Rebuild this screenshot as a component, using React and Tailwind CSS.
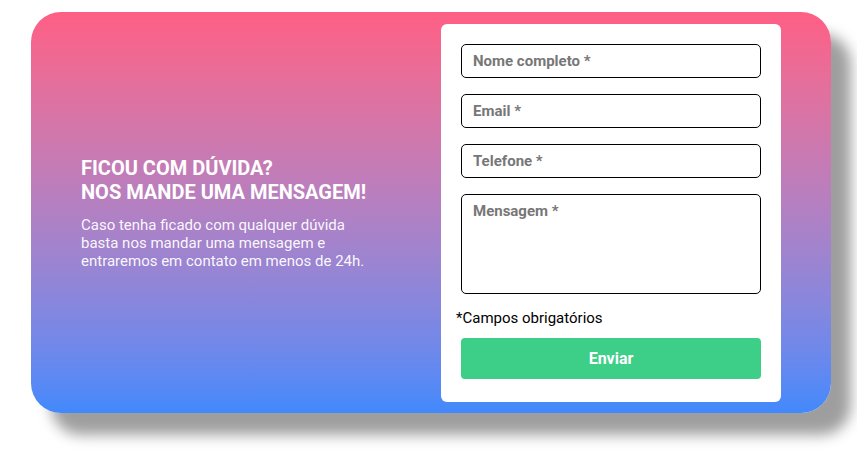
import React from "react";

export default function App() {
  return (
    <div className="min-h-[454px] w-full bg-white pl-[31px] pt-[12px]" style={{ fontFamily: "Roboto, 'Noto Sans', sans-serif" }}>
      <div className="flex w-[800px] rounded-[30px] bg-gradient-to-b from-[#ff5e84] to-[#4189fc] pt-[12px] pb-[11px] pr-[50px] shadow-[20px_22px_14px_rgba(0,0,0,0.38)]">
        <div className="flex flex-1 flex-col justify-center pl-[50px] text-white">
          <h2 className="text-[20px] font-bold uppercase leading-[24px]">
            Ficou com dúvida?
            <br />
            Nos mande uma mensagem!
          </h2>
          <p className="mt-3 w-[300px] text-[15px] leading-[18px] text-white/95">
            Caso tenha ficado com qualquer dúvida basta nos mandar uma mensagem e entraremos em contato em menos de 24h.
          </p>
        </div>
        <div className="flex w-[340px] flex-col rounded-[6px] bg-white px-[20px] pt-[20px] pb-[23px]">
          <div className="flex flex-col gap-4">
            <input
              placeholder="Nome completo *"
              className="h-[34px] w-full rounded-[5px] border border-black px-[11px] text-[15px] font-bold text-black outline-none placeholder:text-[#777]"
            />
            <input
              placeholder="Email *"
              className="h-[34px] w-full rounded-[5px] border border-black px-[11px] text-[15px] font-bold text-black outline-none placeholder:text-[#777]"
            />
            <input
              placeholder="Telefone *"
              className="h-[34px] w-full rounded-[5px] border border-black px-[11px] text-[15px] font-bold text-black outline-none placeholder:text-[#777]"
            />
            <textarea
              placeholder="Mensagem *"
              className="block h-[100px] w-full resize-none rounded-[5px] border border-black px-[11px] pt-[5px] text-[15px] font-bold text-black outline-none placeholder:text-[#777]"
            />
          </div>
          <p className="-ml-[5px] mt-[14px] mb-[10px] text-[15px] leading-[20px] text-black">*Campos obrigatórios</p>
          <button className="h-[41px] w-full rounded-[4px] bg-[#3dce87] text-[16px] font-bold text-white">Enviar</button>
        </div>
      </div>
    </div>
  );
}
